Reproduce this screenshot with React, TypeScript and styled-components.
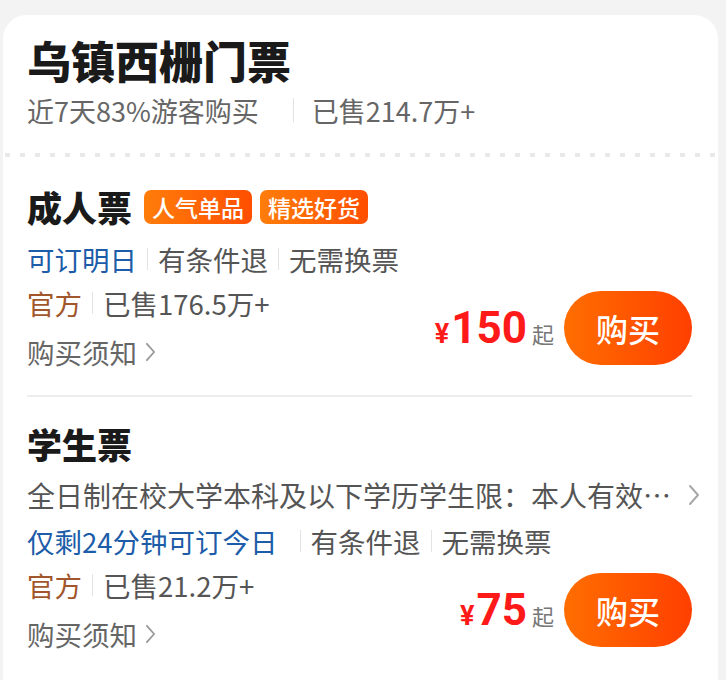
import React from 'react';
import styled, { createGlobalStyle } from 'styled-components';

const GlobalStyle = createGlobalStyle`
  html, body { margin: 0; padding: 0; background: #f3f3f3; }
  body {
    font-family: "Noto Sans CJK SC", "Noto Sans", sans-serif;
    -webkit-font-smoothing: antialiased;
  }
  * { box-sizing: border-box; }
`;

const Card = styled.div`
  margin: 15px 8px 0 3px;
  background: #fff;
  border-radius: 24px 24px 0 0;
  min-height: 665px;
  overflow: hidden;
`;

const Header = styled.div`
  padding: 19px 26px 0 24px;
`;

const Title = styled.h1`
  margin: 0;
  font-size: 44px;
  line-height: 52px;
  font-weight: 900;
  color: #1a1a1a;
`;

const SubLine = styled.div`
  display: flex;
  align-items: center;
  margin-top: 6px;
  height: 36px;
  font-size: 27px;
  color: #666;
`;

const SubSep = styled.span`
  width: 1px;
  height: 24px;
  background: #e2e2e2;
  margin: 0 18px 0 34px;
`;

const Dotted = styled.div`
  margin-top: 25px;
  height: 4px;
  background-image: linear-gradient(90deg, #e9e9e9 0 5px, transparent 5px 15px);
  background-size: 15px 4px;
  background-position: 2px 0;
`;

const Section = styled.section<{ $top: number; $bottom: number; $divider?: boolean }>`
  margin: 0 26px 0 24px;
  padding: ${(p) => p.$top}px 0 ${(p) => p.$bottom}px;
  border-bottom: ${(p) => (p.$divider ? '2px solid #ededed' : 'none')};
`;

const TitleRow = styled.div`
  display: flex;
  align-items: center;
  height: 44px;
`;

const SectionTitle = styled.h2`
  margin: 0 12px 0 0;
  font-size: 35px;
  line-height: 44px;
  font-weight: 800;
  color: #1a1a1a;
`;

const Badge = styled.span`
  height: 34px;
  padding: 0 8px;
  margin-right: 8px;
  border-radius: 7px;
  background: linear-gradient(90deg, #ff7d0a, #ff4f00);
  color: #fff;
  font-size: 23px;
  line-height: 34px;
  font-weight: 500;
`;

const InfoRow = styled.div<{ $mt?: number }>`
  display: flex;
  align-items: center;
  height: 44px;
  margin-top: ${(p) => p.$mt ?? 0}px;
  font-size: 27.5px;
  color: #555;
`;

const tones: Record<string, string> = {
  blue: '#1c5ca8',
  brown: '#a2562c',
  gray: '#555',
};

const Tag = styled.span<{ $tone?: string; $extra?: number }>`
  color: ${(p) => tones[p.$tone ?? 'gray']};
  margin-right: ${(p) => p.$extra ?? 0}px;
  white-space: nowrap;
`;

const Sep = styled.span`
  width: 1px;
  height: 22px;
  background: #e3e3e3;
  margin: 0 10px 0 10px;
`;

const DescRow = styled.div`
  display: flex;
  align-items: center;
  justify-content: space-between;
  height: 44px;
  margin-top: 7px;
  margin-right: -8px;
`;

const DescText = styled.div`
  white-space: nowrap;
  font-size: 28px;
  color: #555;
`;

const BottomBlock = styled.div`
  display: flex;
  align-items: center;
  justify-content: space-between;
`;

const LeftCol = styled.div`
  display: flex;
  flex-direction: column;
`;

const Notice = styled.div`
  display: flex;
  align-items: center;
  height: 44px;
  margin-top: 5px;
  font-size: 27.5px;
  color: #666;
  gap: 8px;
`;

const PriceArea = styled.div`
  display: flex;
  align-items: center;
`;

const Price = styled.div`
  display: flex;
  align-items: baseline;
  margin-right: 10px;
  color: #ff1a1a;
  font-family: Roboto, "Noto Sans", sans-serif;
  font-weight: 700;
`;

const Yen = styled.span`
  font-size: 27px;
  margin-right: 2px;
`;

const Amount = styled.span`
  font-size: 44px;
  line-height: 1;
`;

const Qi = styled.span`
  font-family: "Noto Sans CJK SC", sans-serif;
  font-weight: 400;
  font-size: 22px;
  color: #777;
  margin-left: 5px;
`;

const BuyButton = styled.button`
  width: 128px;
  height: 74px;
  border: none;
  border-radius: 37px;
  background: linear-gradient(90deg, #ff6e00, #ff3f00);
  color: #fff;
  font-family: inherit;
  font-size: 32px;
  font-weight: 500;
  padding: 0;
`;

const Chevron = ({ w = 12, h = 22, color = '#999' }: { w?: number; h?: number; color?: string }) => (
  <svg width={w} height={h} viewBox="0 0 12 22" fill="none">
    <path d="M2 2 L10 11 L2 20" stroke={color} strokeWidth="2" strokeLinecap="round" strokeLinejoin="round" />
  </svg>
);

type Ticket = {
  name: string;
  badges: string[];
  desc?: string;
  book: string;
  bookGap?: number;
  sold: string;
  price: string;
};

const tickets: Ticket[] = [
  { name: '成人票', badges: ['人气单品', '精选好货'], book: '可订明日', sold: '已售176.5万+', price: '150' },
  {
    name: '学生票',
    badges: [],
    desc: '全日制在校大学本科及以下学历学生限：本人有效…',
    book: '仅剩24分钟可订今日',
    bookGap: 12,
    sold: '已售21.2万+',
    price: '75',
  },
];

const TicketSection = ({ t, first }: { t: Ticket; first: boolean }) => (
  <Section $top={first ? 28 : 25} $bottom={first ? 21 : 20} $divider={first}>
    <TitleRow>
      <SectionTitle>{t.name}</SectionTitle>
      {t.badges.map((b) => (
        <Badge key={b}>{b}</Badge>
      ))}
    </TitleRow>
    {t.desc && (
      <DescRow>
        <DescText>{t.desc}</DescText>
        <Chevron w={12} h={22} color="#a8a8a8" />
      </DescRow>
    )}
    <InfoRow $mt={t.desc ? 2 : 8}>
      <Tag $tone="blue" $extra={t.bookGap}>{t.book}</Tag>
      <Sep />
      <Tag>有条件退</Tag>
      <Sep />
      <Tag>无需换票</Tag>
    </InfoRow>
    <BottomBlock>
      <LeftCol>
        <InfoRow>
          <Tag $tone="brown">官方</Tag>
          <Sep />
          <Tag>{t.sold}</Tag>
        </InfoRow>
        <Notice>
          购买须知
          <Chevron w={11} h={20} color="#999" />
        </Notice>
      </LeftCol>
      <PriceArea>
        <Price>
          <Yen>¥</Yen>
          <Amount>{t.price}</Amount>
          <Qi>起</Qi>
        </Price>
        <BuyButton>购买</BuyButton>
      </PriceArea>
    </BottomBlock>
  </Section>
);

export default function App() {
  return (
    <>
      <GlobalStyle />
      <Card lang="zh-CN">
        <Header>
          <Title>乌镇西栅门票</Title>
          <SubLine>
            近7天83%游客购买
            <SubSep />
            已售214.7万+
          </SubLine>
        </Header>
        <Dotted />
        {tickets.map((t, i) => (
          <TicketSection key={t.name} t={t} first={i === 0} />
        ))}
      </Card>
    </>
  );
}
